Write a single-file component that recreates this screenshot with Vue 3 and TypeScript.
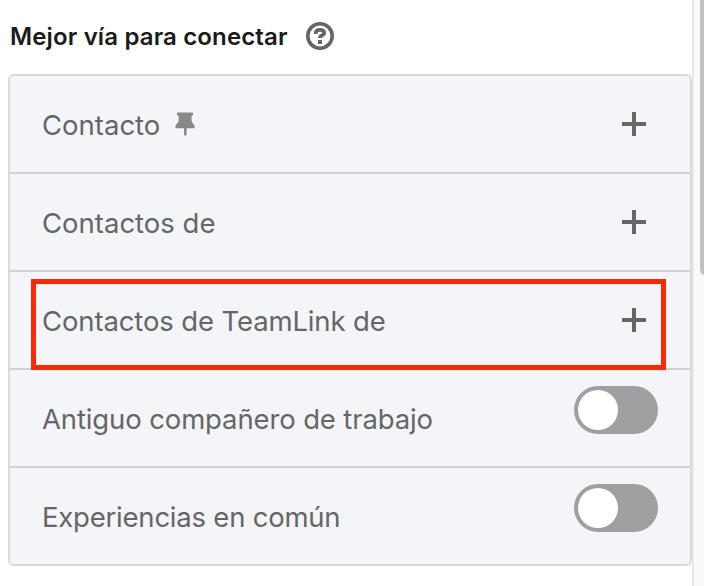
<script setup lang="ts">
import { ref } from 'vue'

interface Filter {
  label: string
  kind: 'add' | 'toggle'
  spacing?: 'snug' | 'tight'
  pinned?: boolean
  highlighted?: boolean
}

const filters: Filter[] = [
  { label: 'Contacto', kind: 'add', pinned: true },
  { label: 'Contactos de', kind: 'add' },
  { label: 'Contactos de TeamLink de', kind: 'add', spacing: 'snug', highlighted: true },
  { label: 'Antiguo compañero de trabajo', kind: 'toggle', spacing: 'snug' },
  { label: 'Experiencias en común', kind: 'toggle', spacing: 'tight' },
]

const enabled = ref<Record<string, boolean>>({})

function toggle(label: string): void {
  enabled.value[label] = !enabled.value[label]
}
</script>

<template>
  <div class="page">
    <main class="content">
      <header class="heading">
        <h2 class="title">Mejor vía para conectar</h2>
        <svg class="help" viewBox="0 0 28 28" fill="none" stroke="#666">
          <circle cx="14" cy="14" r="12.2" stroke-width="3.6" />
          <path d="M9.8 12V10.8Q9.8 7.8 14 7.8T18.2 10.8Q18.2 12.5 16.2 13.2Q14 14 14 16" stroke-width="3.8" />
          <path d="M14 18v4" stroke-width="4" />
        </svg>
      </header>
      <ul class="panel">
        <li v-for="f in filters" :key="f.label" class="row">
          <span class="label" :class="f.spacing">{{ f.label }}</span>
          <svg v-if="f.pinned" class="pin" viewBox="0 0 20 24" fill="#86888a">
            <path d="M2 0.5H18V3.5H16.6V9.5L19.5 13.5V16.2H11.6V22L10.8 23.8H9.8L9 22V16.2H.5V13.5L3.6 9.5V3.5H2Z" />
          </svg>
          <button v-if="f.kind === 'add'" class="add" type="button">
            <svg viewBox="0 0 24 24" width="24" height="24" fill="#666">
              <path d="M10 0h4v10h10v4H14v10h-4V14H0v-4h10z" />
            </svg>
          </button>
          <button
            v-else
            class="switch"
            :class="{ on: enabled[f.label] }"
            type="button"
            role="switch"
            :aria-checked="!!enabled[f.label]"
            @click="toggle(f.label)"
          >
            <span class="knob"></span>
          </button>
          <div v-if="f.highlighted" class="highlight"></div>
        </li>
      </ul>
    </main>
    <aside class="gutter"><div class="thumb"></div></aside>
  </div>
</template>

<style>
body {
  overflow: hidden;
  background: #fff;
}
</style>

<style scoped>
.page {
  display: flex;
  width: 704px;
  height: 586px;
  overflow: hidden;
  font-family: Inter, sans-serif;
}
.content {
  box-sizing: border-box;
  width: 692px;
  padding-left: 8px;
}
.heading {
  display: flex;
  align-items: flex-start;
  height: 74px;
}
.title {
  width: 298px;
  margin: 0;
  padding: 21px 0 0 2px;
  box-sizing: border-box;
  font-size: 24px;
  font-weight: 600;
  line-height: 32px;
  letter-spacing: 0.14px;
  color: #1b1b1b;
  white-space: nowrap;
}
.help {
  width: 28px;
  height: 28px;
  margin-top: 22px;
}
.panel {
  box-sizing: border-box;
  width: 684px;
  margin: 0;
  padding: 0;
  list-style: none;
  background: #f4f5f8;
  border: 2px solid #d9dadb;
  border-radius: 6px;
}
.row {
  position: relative;
  display: flex;
  align-items: flex-start;
  height: 96px;
  padding: 0 32px;
}
.row + .row {
  border-top: 2px solid #d0d1d3;
}
.label {
  margin-top: 29px;
  font-size: 27.5px;
  font-weight: 400;
  line-height: 40px;
  color: #666;
  white-space: nowrap;
}
.label.snug {
  letter-spacing: -0.13px;
}
.label.tight {
  letter-spacing: -0.22px;
}
.pin {
  width: 20px;
  height: 24px;
  margin: 36px 0 0 15px;
}
.add {
  display: flex;
  align-items: center;
  justify-content: center;
  width: 48px;
  height: 96px;
  margin-left: auto;
  padding: 0;
  border: 0;
  background: none;
}
.switch {
  box-sizing: border-box;
  display: flex;
  width: 84px;
  height: 48px;
  margin: 16px 0 0 auto;
  padding: 4px;
  border: 0;
  border-radius: 24px;
  background: #9fa0a1;
}
.switch.on {
  justify-content: flex-end;
  background: #057642;
}
.knob {
  width: 40px;
  height: 40px;
  border-radius: 50%;
  background: #fff;
}
.highlight {
  position: absolute;
  z-index: 1;
  top: 7px;
  left: 21px;
  box-sizing: border-box;
  width: 635px;
  height: 91px;
  border: 5px solid #ff2600;
  pointer-events: none;
}
.gutter {
  box-sizing: border-box;
  display: flex;
  width: 12px;
  padding-left: 6px;
  border-left: 2px solid #e8e8e8;
  background: #fafafa;
}
.thumb {
  flex: none;
  width: 14px;
  height: 276px;
  border-radius: 0 0 7px 7px;
  background: #c1c1c1;
}
</style>
